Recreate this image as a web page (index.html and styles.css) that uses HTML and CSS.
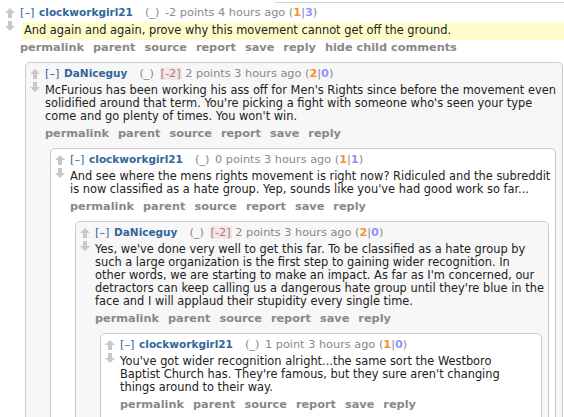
FILE: index.html
```html
<!DOCTYPE html>
<html>
<head>
<meta charset="utf-8">
<link rel="stylesheet" href="styles.css">
</head>
<body>
<div class="topline"></div>
<div class="comment top">
  <div class="votes">
    <svg class="arrow" viewBox="0 0 10 10" width="10" height="10"><path d="M5 0L10 5H7V10H3V5H0Z"/></svg>
    <svg class="arrow down" viewBox="0 0 10 10" width="10" height="10"><path d="M5 10L10 5H7V0H3V5H0Z"/></svg>
  </div>
  <div class="entry">
    <p class="tagline"><a class="expand">[–]</a> <a class="author">clockworkgirl21</a><span class="tag">(_)</span> <span class="meta">-2 points 4 hours ago</span> <span class="ud">(<b class="up">1</b>|<b class="dn">3</b>)</span></p>
    <div class="md hl"><p>And again and again, prove why this movement cannot get off the ground.</p></div>
    <ul class="buttons"><li>permalink</li><li>parent</li><li>source</li><li>report</li><li>save</li><li>reply</li><li>hide child comments</li></ul>
    <div class="child">

      <div class="comment box grey">
        <div class="votes">
          <svg class="arrow" viewBox="0 0 10 10" width="10" height="10"><path d="M5 0L10 5H7V10H3V5H0Z"/></svg>
          <svg class="arrow down" viewBox="0 0 10 10" width="10" height="10"><path d="M5 10L10 5H7V0H3V5H0Z"/></svg>
        </div>
        <div class="entry">
          <p class="tagline"><a class="expand">[–]</a> <a class="author">DaNiceguy</a><span class="tag">(_)</span> <span class="weight">[-2]</span> <span class="meta">2 points 3 hours ago</span> <span class="ud">(<b class="up">2</b>|<b class="dn">0</b>)</span></p>
          <div class="md"><p>McFurious has been working his ass off for Men's Rights since before the movement even<br>solidified around that term. You're picking a fight with someone who's seen your type<br>come and go plenty of times. You won't win.</p></div>
          <ul class="buttons"><li>permalink</li><li>parent</li><li>source</li><li>report</li><li>save</li><li>reply</li></ul>
          <div class="child">

            <div class="comment box white">
              <div class="votes">
                <svg class="arrow" viewBox="0 0 10 10" width="10" height="10"><path d="M5 0L10 5H7V10H3V5H0Z"/></svg>
                <svg class="arrow down" viewBox="0 0 10 10" width="10" height="10"><path d="M5 10L10 5H7V0H3V5H0Z"/></svg>
              </div>
              <div class="entry">
                <p class="tagline"><a class="expand">[–]</a> <a class="author">clockworkgirl21</a><span class="tag">(_)</span> <span class="meta">0 points 3 hours ago</span> <span class="ud">(<b class="up">1</b>|<b class="dn">1</b>)</span></p>
                <div class="md"><p>And see where the mens rights movement is right now? Ridiculed and the subreddit<br>is now classified as a hate group. Yep, sounds like you've had good work so far...</p></div>
                <ul class="buttons"><li>permalink</li><li>parent</li><li>source</li><li>report</li><li>save</li><li>reply</li></ul>
                <div class="child">

                  <div class="comment box grey">
                    <div class="votes">
                      <svg class="arrow" viewBox="0 0 10 10" width="10" height="10"><path d="M5 0L10 5H7V10H3V5H0Z"/></svg>
                      <svg class="arrow down" viewBox="0 0 10 10" width="10" height="10"><path d="M5 10L10 5H7V0H3V5H0Z"/></svg>
                    </div>
                    <div class="entry">
                      <p class="tagline"><a class="expand">[–]</a> <a class="author">DaNiceguy</a><span class="tag">(_)</span> <span class="weight">[-2]</span> <span class="meta">2 points 3 hours ago</span> <span class="ud">(<b class="up">2</b>|<b class="dn">0</b>)</span></p>
                      <div class="md"><p>Yes, we've done very well to get this far. To be classified as a hate group by<br>such a large organization is the first step to gaining wider recognition. In<br>other words, we are starting to make an impact. As far as I'm concerned, our<br>detractors can keep calling us a dangerous hate group until they're blue in the<br>face and I will applaud their stupidity every single time.</p></div>
                      <ul class="buttons"><li>permalink</li><li>parent</li><li>source</li><li>report</li><li>save</li><li>reply</li></ul>
                      <div class="child">

                        <div class="comment box white">
                          <div class="votes">
                            <svg class="arrow" viewBox="0 0 10 10" width="10" height="10"><path d="M5 0L10 5H7V10H3V5H0Z"/></svg>
                            <svg class="arrow down" viewBox="0 0 10 10" width="10" height="10"><path d="M5 10L10 5H7V0H3V5H0Z"/></svg>
                          </div>
                          <div class="entry">
                            <p class="tagline"><a class="expand">[–]</a> <a class="author">clockworkgirl21</a><span class="tag">(_)</span> <span class="meta">1 point 3 hours ago</span> <span class="ud">(<b class="up">1</b>|<b class="dn">0</b>)</span></p>
                            <div class="md"><p>You've got wider recognition alright...the same sort the Westboro<br>Baptist Church has. They're famous, but they sure aren't changing<br>things around to their way.</p></div>
                            <ul class="buttons"><li>permalink</li><li>parent</li><li>source</li><li>report</li><li>save</li><li>reply</li></ul>
                          </div>
                        </div>

                      </div>
                    </div>
                  </div>

                </div>
              </div>
            </div>

          </div>
        </div>
      </div>

    </div>
  </div>
</div>
</body>
</html>
```

FILE: styles.css
```css
html, body {
  margin: 0;
  padding: 0;
  background: #ffffff;
  font-family: "DejaVu Sans", Verdana, sans-serif;
  color: #222222;
  overflow: hidden;
}

.topline {
  margin: 2px 0 0 275px;
  border-top: 1px solid #d4d4d4;
}

.comment {
  display: flex;
  align-items: flex-start;
}

.top {
  padding: 2px 0 0 5px;
}

.votes {
  flex: none;
  width: 15px;
  padding-top: 3px;
  display: flex;
  flex-direction: column;
}

.arrow {
  display: block;
  fill: #c8c8c8;
}

.arrow.down {
  margin-top: 3px;
}

.entry {
  flex: 1;
  min-width: 0;
}

.tagline {
  margin: 0;
  height: 16px;
  font-size: 11.3px;
  line-height: 16px;
  color: #888888;
  white-space: nowrap;
}

.tagline > * {
  line-height: 1;
}

.expand {
  color: #369;
  margin-right: 1px;
}

.author {
  color: #369;
  font-weight: bold;
  font-size: 10.5px;
  margin-right: 12px;
}

.tag {
  color: #888888;
  margin-right: 2px;
}

.weight {
  background: #fbe3e3;
  color: #888888;
  padding: 0 1px;
}

.ud b {
  font-weight: bold;
}

.ud .up {
  color: #f7912f;
}

.ud .dn {
  color: #9494ff;
}

.md {
  padding: 2px 0 3px;
  font-size: 11.4px;
  line-height: 13px;
}

.md p {
  margin: 0;
  white-space: nowrap;
}

.md.hl {
  margin: 1px 0 0 2px;
  padding-left: 2px;
  background: #fdfdcc;
}

.buttons {
  list-style: none;
  margin: 1px 0 0;
  padding: 0;
  height: 14px;
  display: flex;
  font-size: 11.3px;
  line-height: 14px;
  font-weight: bold;
  color: #888888;
  white-space: nowrap;
}

.buttons li {
  padding-right: 9px;
}

.child {
  margin-top: 7px;
}

.box {
  margin-left: 5px;
  margin-right: 1px;
  border: 1px solid #cccccc;
  border-radius: 5px;
  padding: 3px 5px 0 4px;
  min-height: 300px;
}

.grey {
  background: #f7f7f8;
}

.white {
  background: #ffffff;
}
```
